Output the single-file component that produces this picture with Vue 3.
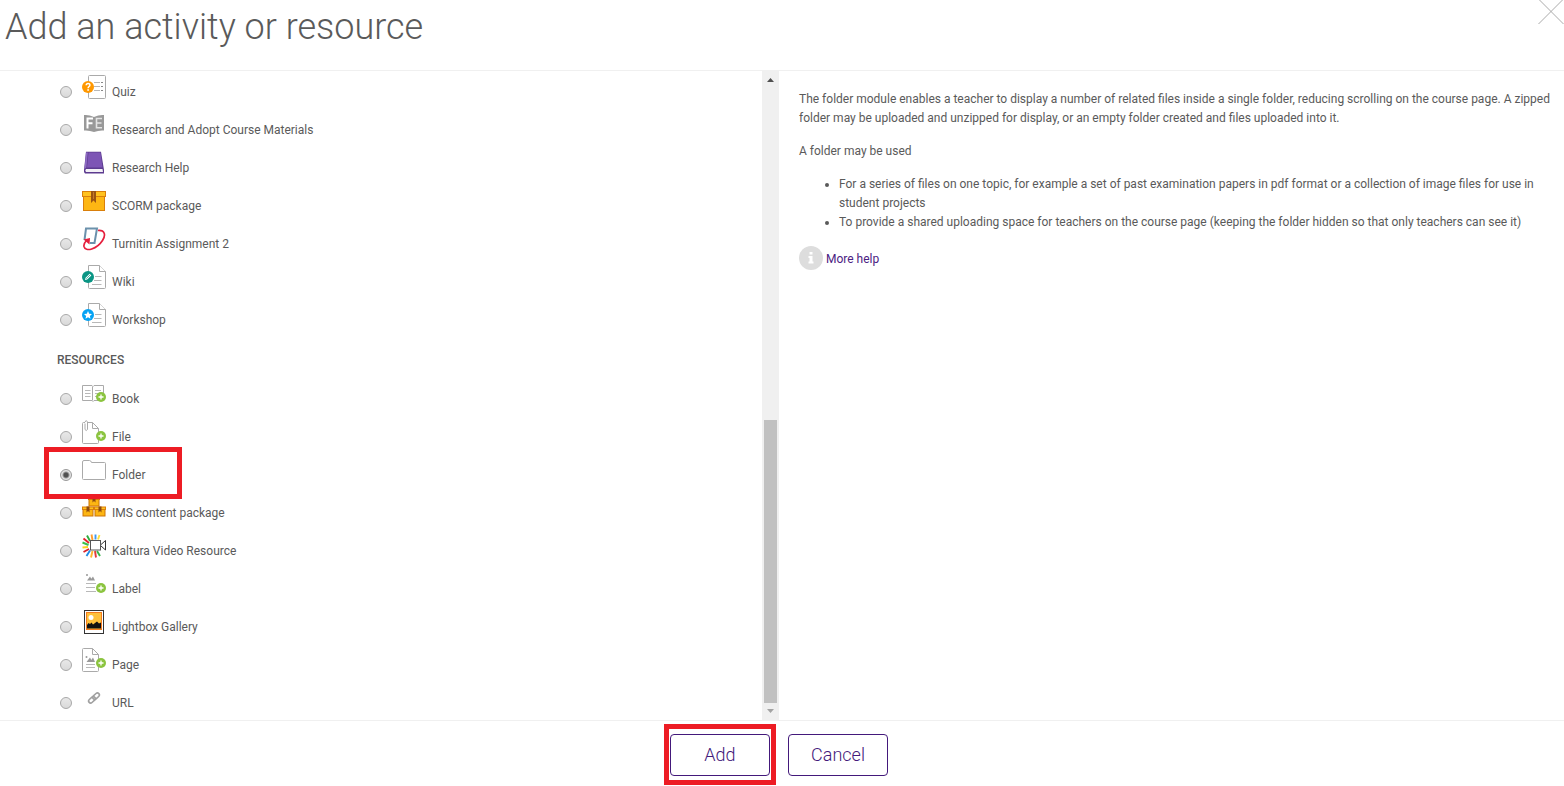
<script setup>
import { ref } from 'vue'

const selected = ref('folder')

const groups = [
  {
    id: 'activities',
    title: '',
    items: [
      { id: 'quiz', label: 'Quiz' },
      { id: 'materials', label: 'Research and Adopt Course Materials' },
      { id: 'help', label: 'Research Help' },
      { id: 'scorm', label: 'SCORM package' },
      { id: 'turnitin', label: 'Turnitin Assignment 2' },
      { id: 'wiki', label: 'Wiki' },
      { id: 'workshop', label: 'Workshop' },
    ],
  },
  {
    id: 'resources',
    title: 'RESOURCES',
    items: [
      { id: 'book', label: 'Book' },
      { id: 'file', label: 'File' },
      { id: 'folder', label: 'Folder', marked: true },
      { id: 'ims', label: 'IMS content package' },
      { id: 'kaltura', label: 'Kaltura Video Resource' },
      { id: 'label', label: 'Label' },
      { id: 'lightbox', label: 'Lightbox Gallery' },
      { id: 'page', label: 'Page' },
      { id: 'url', label: 'URL' },
    ],
  },
]

const plusShift = { book: 0, file: 1, label: 1, page: 0 }

const boxes = [
  { x: 6, y: 0 },
  { x: 0, y: 10 },
  { x: 12, y: 10 },
]

const rays = [
  { d: 'M10.500 6 9.500 0.500', c: '#ff9d2e' },
  { d: 'M13.500 5.500V0.500', c: '#3e98f0' },
  { d: 'M8 7 5 1.500', c: '#2fae3c' },
  { d: 'M7 9 1.500 4.500', c: '#e8202c' },
  { d: 'M6.500 11 0.500 8.500', c: '#3cc04a' },
  { d: 'M6 13 0.500 13.500', c: '#ffd21f' },
  { d: 'M7 15 1.500 18', c: '#d8232c' },
  { d: 'M8 16.500 4.500 22', c: '#1e8be6' },
  { d: 'M10.500 17 9 23.500', c: '#ffb52e' },
  { d: 'M13 17 14 23.500', c: '#e23b3b' },
  { d: 'M15 17 18 22', c: '#36b54a' },
  { d: 'M16 5.500 17.500 1', c: '#ffe03d' },
]
</script>

<template>
  <form class="dialog" @submit.prevent>
    <header class="head">
      <h1>Add an activity or resource</h1>
      <button type="button" class="close" aria-label="Close">
        <svg viewBox="0 0 26 26" width="26" height="26"><path d="M0.500 -1 25.500 24M25.500 -1 0.500 24" /></svg>
      </button>
    </header>

    <main class="body">
      <section class="chooser">
        <div class="list">
          <template v-for="g in groups" :key="g.id">
            <h2 v-if="g.title">{{ g.title }}</h2>
            <div v-for="it in g.items" :key="it.id" class="row" :class="{ marked: it.marked }">
              <input :id="'opt-' + it.id" v-model="selected" type="radio" name="module" :value="it.id" />
              <label :for="'opt-' + it.id">
                <svg class="icon" viewBox="0 0 24 24" width="24" height="24" aria-hidden="true">
                  <g v-if="it.id === 'quiz'">
                    <rect class="sheet" x="6.500" y="0.500" width="17" height="23" rx="1" />
                    <path class="thin" d="M12 7.500H18M12 11.500H18M12 15.500H18" />
                    <path class="dots" d="M19 7.500H21M19 11.500H21M19 15.500H21" />
                    <circle cx="6" cy="12" r="6" fill="#ff9800" />
                    <path d="M4.200 10.300C4.300 7.800 8 7.900 7.900 10.200 7.800 11.600 6.100 11.500 6.100 13.200" fill="none" stroke="#fff" stroke-width="1.500" />
                    <rect x="5.300" y="14.200" width="1.600" height="1.600" fill="#fff" />
                  </g>
                  <g v-else-if="it.id === 'materials'">
                    <path d="M2 2Q7 1.500 12 4 17 1.500 22 2V17.500Q17 17 12 19 7 17 2 17.500Z" fill="#999" />
                    <path d="M5.500 15.500V5.500H11M5.500 10.200H10.500" fill="none" stroke="#fff" stroke-width="2" />
                    <path d="M20 5.500H14.500V14.800H20M14.500 10H19.500" fill="none" stroke="#e4e4e4" stroke-width="1.600" />
                  </g>
                  <g v-else-if="it.id === 'help'">
                    <path d="M4 .8H19L22 19V22.500H3Q1.500 21.500 2 19Z" fill="#5c3b8f" />
                    <path d="M6.500 1.500H18.500L20.500 16.500H5Z" fill="#7d55b5" />
                    <path d="M4 1.500H5.800L4.400 16.500 2.500 18Z" fill="#8e6bc4" />
                    <path d="M4 18H20.500L21 21H4Q2.500 19.500 4 18Z" fill="#f3f1f6" />
                  </g>
                  <g v-else-if="it.id === 'scorm'">
                    <rect x="1.500" y="5" width="21" height="16.500" fill="#fdb613" stroke="#d97f0b" />
                    <rect x=".5" y="2.500" width="23" height="5" fill="#ffc21e" stroke="#d97f0b" />
                    <path d="M9 2H14V14L11.500 11.500 9 14Z" fill="#9a5413" />
                    <path d="M11.500 3V10" stroke="#c67a2b" />
                  </g>
                  <g v-else-if="it.id === 'turnitin'">
                    <path d="M4 1H15.500L12.500 17H1.800Z" fill="#fff" />
                    <path d="M2.500 13 4 1.500H15L12.500 16H8" fill="none" stroke="#6b91ac" stroke-width="2" />
                    <path d="M16 3.500C23 3 24 8 20.500 13.500 15 22 3.500 25.500 2 19.500 1.500 17 3 15 4.500 13.500" fill="none" stroke="#e51f3d" stroke-width="1.700" />
                    <path d="M1.500 12.500 8 11 7.500 17.500Z" fill="#e51f3d" />
                  </g>
                  <g v-else-if="it.id === 'wiki' || it.id === 'workshop'">
                    <path class="sheet" d="M6.500 0.500H17.500L23.500 6.500V22.500Q23.500 23.500 22.500 23.500H7.500Q6.500 23.500 6.500 22.500Z" />
                    <path class="sheet" d="M17.500 0.500V6.500H23.500" />
                    <path class="thin" d="M13 11.500H19.500M12 15.500H19.500M10 19.500H19.500" />
                    <template v-if="it.id === 'wiki'">
                      <circle cx="6" cy="12" r="6" fill="#0a9584" />
                      <path d="M3 15 3.600 12.800 7.600 8.800 9.300 10.500 5.200 14.500Z" fill="#fff" />
                      <path d="M4.300 13.700 8 10" stroke="#0a9584" stroke-width=".7" />
                    </template>
                    <template v-else>
                      <circle cx="6" cy="12" r="6" fill="#05a3f4" />
                      <path d="M6 8 7.200 10.700 10 11 7.900 12.900 8.500 15.700 6 14.300 3.500 15.700 4.100 12.900 2 11 4.800 10.700Z" fill="#fff" />
                    </template>
                  </g>
                  <g v-else-if="it.id === 'book'">
                    <path class="sheet" d="M.5 3.500H10L11 4.500 12 3.500H21.500V18.500H12L11 19.500 10 18.500H.5ZM10.500 4.500V18.500" />
                    <path class="thin" d="M3 8.500H8.500M3 11.500H8.500M3 14.500H8.500M13 8.500H19M13 11.500H19M13 14.500H17" />
                  </g>
                  <g v-else-if="it.id === 'file'">
                    <path class="sheet" d="M3 2.500H1.500Q.5 2.500 .5 3.500V22.500Q.5 23.500 1.500 23.500H15.500Q16.500 23.500 16.500 22.500V8.500L10.500 2.500H6M10.500 2.500V8.500H16.500" />
                    <path class="sheet" d="M3 3.500V9.500Q4.200 11.500 5.500 9.500V2Q4.200 -1 3 2" />
                  </g>
                  <g v-else-if="it.id === 'folder'">
                    <path class="sheet" d="M.5 20.500V4Q.5 2.500 2 2.500H7.500Q9 2.500 9.500 4.500H22.500Q23.500 4.500 23.500 5.500V20.500Q23.500 21.500 22.500 21.500H1.500Q.5 21.500 .5 20.500Z" />
                  </g>
                  <g v-else-if="it.id === 'ims'">
                    <g v-for="(b, i) in boxes" :key="i" :transform="`translate(${b.x} ${b.y})`">
                      <rect x="1" y="2.500" width="10" height="7.500" fill="#fdb613" stroke="#cc7408" />
                      <rect x=".5" y="1" width="11" height="2.500" fill="#ffc21e" stroke="#d97f0b" />
                      <path d="M4.500 .5H7.500V6.500L6 5 4.500 6.500Z" fill="#8d4a10" />
                    </g>
                  </g>
                  <g v-else-if="it.id === 'kaltura'">
                    <path v-for="r in rays" :key="r.d" :d="r.d" :stroke="r.c" stroke-width="1.900" />
                    <rect x="8.500" y="6.500" width="10" height="9.500" fill="#fff" stroke="#555" />
                    <path d="M18.500 11 23.500 6.500V16L18.500 11.500" fill="#fff" stroke="#333" />
                  </g>
                  <g v-else-if="it.id === 'label'">
                    <path d="M5 8.500 8 4.500 9.300 6.800 11 4.500 13 8.500Z" fill="#999" />
                    <circle cx="5" cy="3" r="1" fill="#999" />
                    <path class="thin" d="M4 11.500H14M4 15.500H13M4 19.500H14" />
                  </g>
                  <g v-else-if="it.id === 'lightbox'">
                    <rect x="2.500" y=".5" width="19" height="23" fill="#fff" stroke="#333" />
                    <rect x="4" y="2" width="16" height="18" fill="#f47c20" />
                    <rect x="5" y="3" width="14" height="16" fill="#ffc13b" />
                    <circle cx="9" cy="7.500" r="2.500" fill="#fff" />
                    <path d="M5 15 6.500 13 8 14 9.500 12.500 11 14.500 13 13 15 11.500 17 13.500 19 12.500V18.500H5Z" fill="#111" />
                  </g>
                  <g v-else-if="it.id === 'page'">
                    <path class="sheet" d="M1.500 .5H10.500L16.500 6.500V22.500Q16.500 23.500 15.500 23.500H1.500Q.5 23.500 .5 22.500V1.500Q.5 .5 1.500 .5ZM10.500 .5V6.500H16.500" />
                    <path d="M4.500 14 8 9.500 9.300 12 11 9.500 13 14Z" fill="#999" />
                    <circle cx="4.500" cy="9" r="1" fill="#999" />
                    <path class="thin" d="M4 16.500H13M4 19.500H13" />
                  </g>
                  <g v-else-if="it.id === 'url'" transform="translate(0 4) rotate(-42 12 8)" fill="none" stroke="#a0a0a0" stroke-width="1.600">
                    <rect x="5.500" y="6" width="7.500" height="4" rx="2" />
                    <rect x="11" y="6" width="7.500" height="4" rx="2" />
                  </g>
                  <g v-if="it.id in plusShift" :transform="`translate(0 ${plusShift[it.id]})`">
                    <circle cx="19" cy="15" r="5" fill="#8bc43f" />
                    <path d="M19 12.500V17.500M16.500 15H21.500" stroke="#fff" stroke-width="1.300" />
                  </g>
                </svg>
                <span>{{ it.label }}</span>
              </label>
            </div>
          </template>
        </div>
        <div class="scrollbar" aria-hidden="true">
          <svg width="17" height="17" viewBox="0 0 17 17"><path d="M5 11 8.500 7 12 11Z" fill="#505050" /></svg>
          <div class="space"></div>
          <div class="thumb"></div>
          <svg width="17" height="17" viewBox="0 0 17 17"><path d="M5 6 8.500 10 12 6Z" fill="#a3a3a3" /></svg>
        </div>
      </section>

      <section class="info">
        <p>The folder module enables a teacher to display a number of related files inside a single folder, reducing scrolling on the course page. A zipped folder may be uploaded and unzipped for display, or an empty folder created and files uploaded into it.</p>
        <p>A folder may be used</p>
        <ul>
          <li>For a series of files on one topic, for example a set of past examination papers in pdf format or a collection of image files for use in student projects</li>
          <li>To provide a shared uploading space for teachers on the course page (keeping the folder hidden so that only teachers can see it)</li>
        </ul>
        <a href="#" class="more">
          <svg viewBox="0 0 24 24" width="24" height="24" aria-hidden="true">
            <circle cx="12" cy="12" r="12" fill="#ddd" />
            <path d="M10.500 6H13.500V8.500H10.500ZM9.500 10H13.500V15.500H14.500V17.500H9.500V15.500H10.500V12H9.500Z" fill="#fff" />
          </svg>
          <span>More help</span>
        </a>
      </section>
    </main>

    <footer class="foot">
      <div class="marked"><button type="submit">Add</button></div>
      <button type="button">Cancel</button>
    </footer>
  </form>
</template>

<style>
body {
  margin: 0;
  background: #fff;
}
</style>

<style scoped>
.dialog {
  display: flex;
  flex-direction: column;
  min-height: 100vh;
  box-sizing: border-box;
  font: 12px/19px Roboto, sans-serif;
  color: #5a5a5a;
}
.head {
  display: flex;
  justify-content: space-between;
  align-items: flex-start;
  height: 70px;
  padding-left: 5px;
  border-bottom: 1px solid #f0f0f0;
}
h1 {
  margin: 0;
  padding-top: 3px;
  font-size: 36px;
  line-height: 48px;
  font-weight: 300;
}
.close {
  padding: 0;
  border: 0;
  background: none;
}
.close svg {
  display: block;
  fill: none;
  stroke: #aaa;
}
.body {
  display: flex;
  flex: 1;
}
.chooser {
  display: flex;
  flex: none;
  width: calc(50% - 3px);
}
.list {
  flex: 1;
  padding-left: 57px;
}
h2 {
  margin: 0;
  padding: 14px 0 8px;
  font-size: 12px;
  line-height: 19px;
  font-weight: 500;
}
.row {
  position: relative;
  display: flex;
  align-items: flex-start;
  height: 38px;
}
.row input {
  appearance: none;
  flex: none;
  width: 12px;
  height: 12px;
  margin: 15px 10px 0 3px;
  border: 1px solid #a8a8a8;
  border-radius: 50%;
  background: linear-gradient(#e8e8e8, #d9d9d9);
}
.row input:checked {
  border-color: #999;
  background: radial-gradient(circle, #505050 0 2px, #e2e2e2 4px);
}
.row label {
  display: flex;
  align-items: flex-start;
  gap: 6px;
}
.row label span {
  padding-top: 12px;
}
.icon {
  flex: none;
  margin-top: 4px;
}
.sheet {
  fill: #fff;
  stroke: #aaa;
}
.thin {
  fill: none;
  stroke: #b8b8b8;
}
.dots {
  stroke: #888;
}
.marked::after {
  content: '';
  position: absolute;
  z-index: 1;
  box-sizing: border-box;
  border: 5px solid #ed1c24;
  pointer-events: none;
}
.row.marked::after {
  left: -13px;
  top: -7px;
  width: 138px;
  height: 52px;
}
.scrollbar {
  display: flex;
  flex-direction: column;
  flex: none;
  width: 17px;
  background: #f0f0f0;
}
.scrollbar svg {
  flex: none;
}
.space {
  flex: 332;
}
.thumb {
  flex: 283;
  margin: 0 2px;
  background: #c1c1c1;
}
.info {
  flex: 1;
  padding: 19px 12px 0 20px;
}
p,
ul {
  margin: 0 0 14px;
}
ul {
  padding-left: 40px;
}
.more {
  display: inline-flex;
  align-items: center;
  gap: 3px;
  color: #4b2182;
  text-decoration: none;
}
.more span {
  padding-top: 2px;
}
.foot {
  display: flex;
  justify-content: center;
  gap: 18px;
  padding: 13px 6px 10px 0;
  border-top: 1px solid #f0f0f0;
}
.foot div {
  position: relative;
}
.foot .marked::after {
  inset: -10px -6px -9px;
}
.foot button {
  display: block;
  width: 100px;
  height: 42px;
  padding: 0;
  border: 1px solid #43197b;
  border-radius: 4px;
  background: #fff;
  color: #43197b;
  font: 300 18px/24px Roboto, sans-serif;
}
</style>
